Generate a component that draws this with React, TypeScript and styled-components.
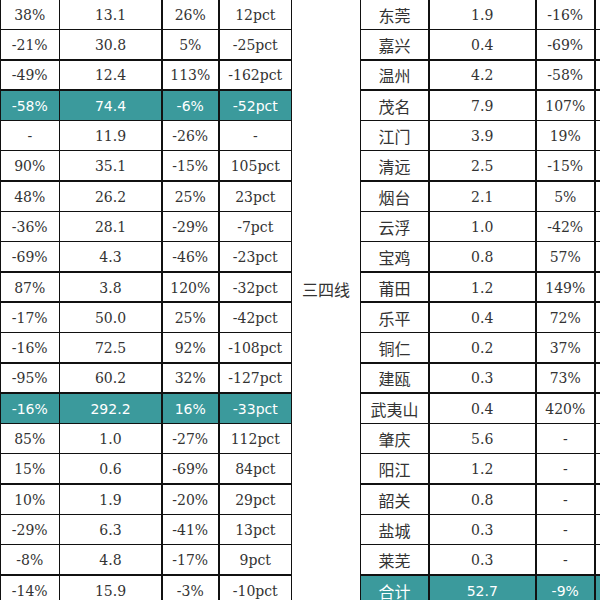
import styled, { createGlobalStyle } from "styled-components";

const GlobalStyle = createGlobalStyle`
  html, body {
    margin: 0;
    padding: 0;
    background: #ffffff;
    overflow: hidden;
  }
`;

const Page = styled.div`
  display: flex;
  align-items: flex-start;
  width: 600px;
  height: 600px;
  overflow: hidden;
  background: #ffffff;
`;

const Grid = styled.div<{ $cols: string }>`
  display: grid;
  grid-template-columns: ${(p) => p.$cols};
  grid-auto-rows: 28.8px;
  gap: 1.5px;
  background: #111111;
  border-left: 1.5px solid #111111;
  border-right: 1.5px solid #111111;
  flex-shrink: 0;
`;

const Cell = styled.div<{ $hl?: boolean; $name?: boolean }>`
  display: flex;
  align-items: center;
  justify-content: center;
  padding-top: 1px;
  background: ${(p) => (p.$hl ? "#3b9a9c" : "#ffffff")};
  color: ${(p) => (p.$hl ? "#ffffff" : "#333333")};
  font-family: ${(p) =>
    p.$hl
      ? '"DejaVu Sans", "Noto Sans CJK SC", sans-serif'
      : '"DejaVu Serif", "Noto Sans CJK SC", serif'};
  font-size: ${(p) => (p.$name ? "16px" : "14px")};
  white-space: nowrap;
`;

const Tier = styled.div`
  width: 68px;
  height: 578px;
  display: flex;
  align-items: center;
  justify-content: center;
  flex-shrink: 0;
  font-family: "Noto Sans CJK SC", sans-serif;
  font-size: 16px;
  color: #333333;
`;

const leftRows: { v: string[]; hl?: boolean }[] = [
  { v: ["38%", "13.1", "26%", "12pct"] },
  { v: ["-21%", "30.8", "5%", "-25pct"] },
  { v: ["-49%", "12.4", "113%", "-162pct"] },
  { v: ["-58%", "74.4", "-6%", "-52pct"], hl: true },
  { v: ["-", "11.9", "-26%", "-"] },
  { v: ["90%", "35.1", "-15%", "105pct"] },
  { v: ["48%", "26.2", "25%", "23pct"] },
  { v: ["-36%", "28.1", "-29%", "-7pct"] },
  { v: ["-69%", "4.3", "-46%", "-23pct"] },
  { v: ["87%", "3.8", "120%", "-32pct"] },
  { v: ["-17%", "50.0", "25%", "-42pct"] },
  { v: ["-16%", "72.5", "92%", "-108pct"] },
  { v: ["-95%", "60.2", "32%", "-127pct"] },
  { v: ["-16%", "292.2", "16%", "-33pct"], hl: true },
  { v: ["85%", "1.0", "-27%", "112pct"] },
  { v: ["15%", "0.6", "-69%", "84pct"] },
  { v: ["10%", "1.9", "-20%", "29pct"] },
  { v: ["-29%", "6.3", "-41%", "13pct"] },
  { v: ["-8%", "4.8", "-17%", "9pct"] },
  { v: ["-14%", "15.9", "-3%", "-10pct"] },
];

const rightRows: { v: string[]; hl?: boolean }[] = [
  { v: ["东莞", "1.9", "-16%", ""] },
  { v: ["嘉兴", "0.4", "-69%", ""] },
  { v: ["温州", "4.2", "-58%", ""] },
  { v: ["茂名", "7.9", "107%", ""] },
  { v: ["江门", "3.9", "19%", ""] },
  { v: ["清远", "2.5", "-15%", ""] },
  { v: ["烟台", "2.1", "5%", ""] },
  { v: ["云浮", "1.0", "-42%", ""] },
  { v: ["宝鸡", "0.8", "57%", ""] },
  { v: ["莆田", "1.2", "149%", ""] },
  { v: ["乐平", "0.4", "72%", ""] },
  { v: ["铜仁", "0.2", "37%", ""] },
  { v: ["建瓯", "0.3", "73%", ""] },
  { v: ["武夷山", "0.4", "420%", ""] },
  { v: ["肇庆", "5.6", "-", ""] },
  { v: ["阳江", "1.2", "-", ""] },
  { v: ["韶关", "0.8", "-", ""] },
  { v: ["盐城", "0.3", "-", ""] },
  { v: ["莱芜", "0.3", "-", ""] },
  { v: ["合计", "52.7", "-9%", ""], hl: true },
];

export default function App() {
  return (
    <Page>
      <GlobalStyle />
      <Grid $cols="57.5px 101px 55.5px 71.5px">
        {leftRows.map((row, i) =>
          row.v.map((text, j) => (
            <Cell key={`l${i}-${j}`} $hl={row.hl}>
              {text}
            </Cell>
          ))
        )}
      </Grid>
      <Tier>三四线</Tier>
      <Grid $cols="67px 105.5px 57.5px 60px">
        {rightRows.map((row, i) =>
          row.v.map((text, j) => (
            <Cell key={`r${i}-${j}`} $hl={row.hl} $name={j === 0}>
              {text}
            </Cell>
          ))
        )}
      </Grid>
    </Page>
  );
}
